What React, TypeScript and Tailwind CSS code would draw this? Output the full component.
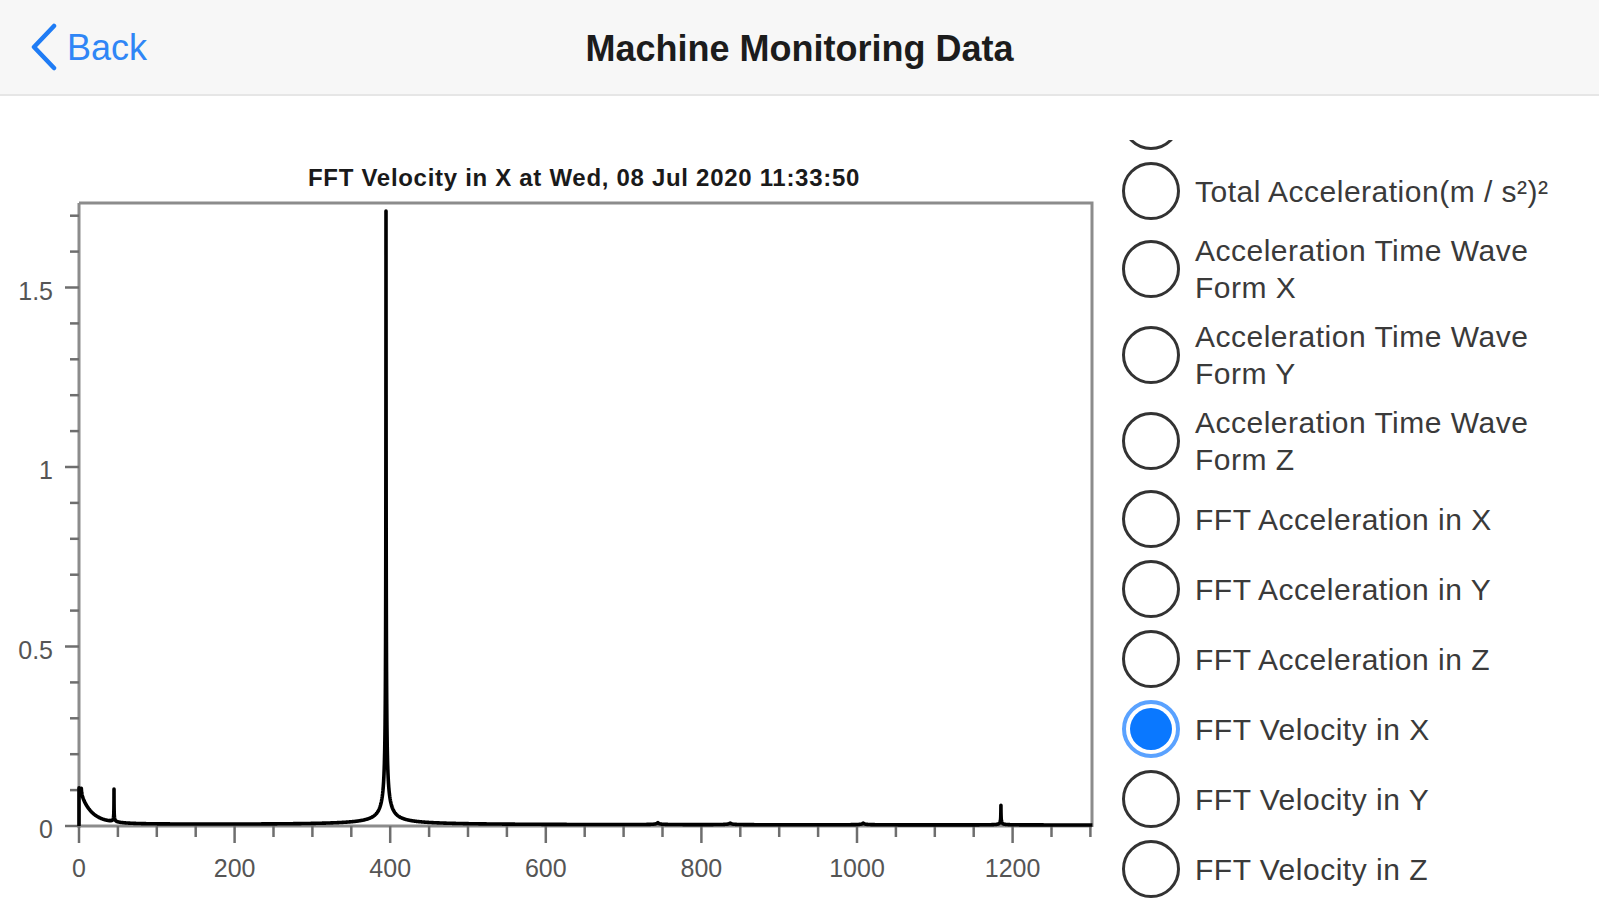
import React from 'react';

// plot geometry (page coordinates, svg viewBox starts at y=96)
const X0 = 79;
const XK = 0.778;
const Y0 = 826;
const YK = 359;
const px = (f: number) => X0 + f * XK;
const py = (v: number) => Y0 - v * YK;

const peak = (f: number, f0: number, a: number, tail: number) =>
  a / (1 + (Math.abs(f - f0) * a) / tail);

function spectrum(f: number) {
  return (
    0.002 +
    0.09 * Math.exp(-f / 14) +
    0.01 / (1 + f / 30) +
    peak(f, 3, 0.02, 0.01) +
    peak(f, 394.6, 1.71, 0.4) +
    peak(f, 45, 0.092, 0.01) +
    peak(f, 1185, 0.055, 0.01) +
    peak(f, 744, 0.006, 0.01) +
    peak(f, 837, 0.005, 0.01) +
    peak(f, 1008, 0.005, 0.01)
  );
}

function buildPath() {
  const pts: string[] = [`${px(0)},${Y0}`];
  const near = [394.6, 45, 1185, 3];
  let f = 0;
  while (f <= 1303) {
    pts.push(`${px(f).toFixed(2)},${py(spectrum(f)).toFixed(2)}`);
    const close = near.some((n) => Math.abs(f - n) < 6);
    f += close ? 0.05 : 0.5;
  }
  return 'M' + pts.join('L');
}

const PATH = buildPath();

function Chart() {
  const yMinor = Array.from({ length: 18 }, (_, i) => i / 10);
  const xMinor = Array.from({ length: 27 }, (_, i) => i * 50);
  return (
    <svg width="1100" height="804" viewBox="0 96 1100 804" className="block">
      <text
        x="584"
        y="177"
        textAnchor="middle"
        dominantBaseline="central"
        fontSize="24"
        fontWeight="700"
        letterSpacing="0.7"
        fill="#1a1a1a"
        fontFamily="'Liberation Sans', Arial, sans-serif"
      >
        FFT Velocity in X at Wed, 08 Jul 2020 11:33:50
      </text>

      {/* frame */}
      <path d="M79 203 L1092 203 L1092 827" fill="none" stroke="#8c8c8c" strokeWidth="3" />
      <line x1="79" y1="203" x2="79" y2="828" stroke="#8c8c8c" strokeWidth="3" />
      <line x1="79" y1="826" x2="1092" y2="826" stroke="#8c8c8c" strokeWidth="3" />

      {/* y ticks */}
      {yMinor.map((v) => {
        const major = Math.round(v * 10) % 5 === 0;
        return (
          <line
            key={v}
            x1={major ? 65 : 70}
            x2={79}
            y1={py(v)}
            y2={py(v)}
            stroke="#6e6e6e"
            strokeWidth="2.5"
          />
        );
      })}
      {[
        [0, '0'],
        [0.5, '0.5'],
        [1, '1'],
        [1.5, '1.5'],
      ].map(([v, l]) => (
        <text
          key={l as string}
          x="53"
          y={py(v as number) + 3}
          textAnchor="end"
          dominantBaseline="central"
          fontSize="25"
          fill="#555"
          fontFamily="'Liberation Sans', Arial, sans-serif"
        >
          {l}
        </text>
      ))}

      {/* x ticks */}
      {xMinor.map((f) => {
        const major = f % 200 === 0;
        return (
          <line
            key={f}
            x1={px(f)}
            x2={px(f)}
            y1={826}
            y2={major ? 843 : 837}
            stroke="#6e6e6e"
            strokeWidth="2.5"
          />
        );
      })}
      {[0, 200, 400, 600, 800, 1000, 1200].map((f) => (
        <text
          key={f}
          x={px(f)}
          y="868"
          textAnchor="middle"
          dominantBaseline="central"
          fontSize="25"
          fill="#555"
          fontFamily="'Liberation Sans', Arial, sans-serif"
        >
          {f}
        </text>
      ))}

      <path d={PATH} fill="none" stroke="#000" strokeWidth="3.6" strokeLinejoin="round" />
    </svg>
  );
}

const OPTIONS = [
  '',
  'Total Acceleration(m / s²)²',
  'Acceleration Time Wave Form X',
  'Acceleration Time Wave Form Y',
  'Acceleration Time Wave Form Z',
  'FFT Acceleration in X',
  'FFT Acceleration in Y',
  'FFT Acceleration in Z',
  'FFT Velocity in X',
  'FFT Velocity in Y',
  'FFT Velocity in Z',
];

function Radio({ checked }: { checked: boolean }) {
  if (checked) {
    return (
      <span className="w-[58px] h-[58px] shrink-0 rounded-full border-[4px] border-[#5aa2ff] bg-white p-[4px] flex">
        <span className="flex-1 rounded-full bg-[#0a78ff]" />
      </span>
    );
  }
  return <span className="w-[58px] h-[58px] shrink-0 rounded-full border-[3px] border-[#333]" />;
}

export default function App() {
  const selected = 'FFT Velocity in X';
  return (
    <div className="w-[1599px] h-[900px] overflow-hidden bg-white font-['Liberation_Sans',Arial,sans-serif]">
      <header className="h-[96px] bg-[#f7f7f7] border-b-2 border-[#e6e6e6] grid grid-cols-[1fr_auto_1fr] items-center">
        <div className="flex items-center pl-[30px] gap-[9px] text-[#2f86f6]">
          <svg width="28" height="48" viewBox="0 0 28 48">
            <path
              d="M24 3 L4 24 L24 45"
              fill="none"
              stroke="#1f7cf5"
              strokeWidth="4.5"
              strokeLinecap="round"
              strokeLinejoin="round"
            />
          </svg>
          <span className="text-[36px] leading-none mt-[2px]">Back</span>
        </div>
        <h1 className="text-[36px] font-bold text-[#1c1c1c] leading-none mt-[4px]">Machine Monitoring Data</h1>
        <div />
      </header>

      <div className="flex h-[804px]">
        <div className="w-[1100px] shrink-0">
          <Chart />
        </div>
        <div className="flex-1 mt-[44px] overflow-hidden">
          <ul className="-mt-[54px] pl-[22px]">
            {OPTIONS.map((o, i) => (
              <li key={i} className="flex items-center gap-[15px] py-[6px] min-h-[70px]">
                <Radio checked={o === selected} />
                {o && (
                  <span className="max-w-[380px] text-[30px] leading-[37px] tracking-[0.5px] text-[#3a3a3a]">
                    {o}
                  </span>
                )}
              </li>
            ))}
          </ul>
        </div>
      </div>
    </div>
  );
}
